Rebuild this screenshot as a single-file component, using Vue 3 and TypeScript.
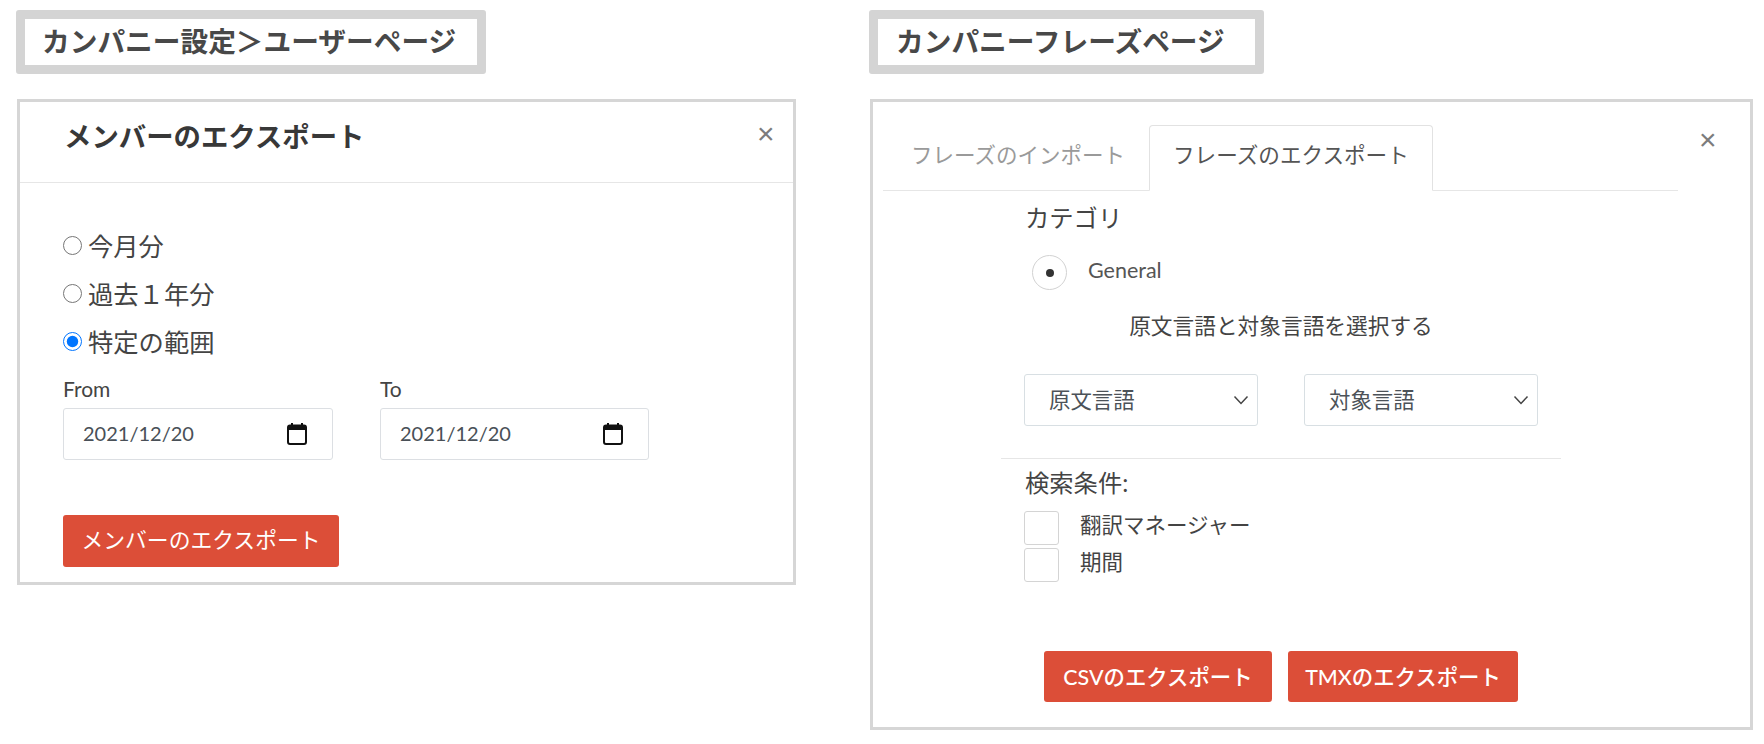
<script setup lang="ts">
const periods: { label: string; checked: boolean }[] = [
  { label: '今月分', checked: false },
  { label: '過去１年分', checked: false },
  { label: '特定の範囲', checked: true },
]
const dates: string[] = ['From', 'To']
const selects: string[] = ['原文言語', '対象言語']
const filters: string[] = ['翻訳マネージャー', '期間']
</script>

<template>
  <div class="page">
    <section class="col col-left">
      <h2 class="caption caption-left">カンパニー設定＞ユーザーページ</h2>
      <div class="panel panel-left">
        <header class="modal-head">
          <h3 class="modal-title">メンバーのエクスポート</h3>
          <span class="close close-left">×</span>
        </header>
        <div class="modal-body">
          <label v-for="p in periods" :key="p.label" class="period">
            <input class="period-radio" type="radio" name="period" :checked="p.checked" />
            <span>{{ p.label }}</span>
          </label>
          <div class="dates">
            <div v-for="d in dates" :key="d" class="date-field">
              <div class="date-label">{{ d }}</div>
              <div class="date-input">
                <span>2021/12/20</span>
                <svg class="cal" width="22" height="24" viewBox="0 0 22 24">
                  <rect x="2" y="3.5" width="18" height="18.5" rx="2" fill="none" stroke="#111" stroke-width="2" />
                  <rect x="2" y="3" width="18" height="5" fill="#111" />
                  <rect x="5" y="1" width="2" height="3" fill="#111" />
                  <rect x="15" y="1" width="2" height="3" fill="#111" />
                </svg>
              </div>
            </div>
          </div>
          <button class="btn btn-member" type="button">メンバーのエクスポート</button>
        </div>
      </div>
    </section>

    <section class="col col-right">
      <h2 class="caption caption-right">カンパニーフレーズページ</h2>
      <div class="panel panel-right">
        <span class="close close-right">×</span>
        <nav class="tabs">
          <span class="tab">フレーズのインポート</span>
          <span class="tab tab-active">フレーズのエクスポート</span>
        </nav>
        <div class="phrase-body">
          <div class="heading cat-heading">カテゴリ</div>
          <div class="cat-row">
            <span class="cat-radio"><i class="cat-dot"></i></span>
            <span class="cat-name">General</span>
          </div>
          <div class="lang-note">原文言語と対象言語を選択する</div>
          <div class="selects">
            <div v-for="s in selects" :key="s" class="select">
              <span class="select-text">{{ s }}</span>
              <svg width="16" height="10" viewBox="0 0 16 10">
                <path d="M1.5 1.5 L8 8.5 L14.5 1.5" fill="none" stroke="#444" stroke-width="1.5" />
              </svg>
            </div>
          </div>
          <div class="filters">
            <div class="heading filter-heading">検索条件:</div>
            <div v-for="f in filters" :key="f" class="filter">
              <span class="check"></span>
              <span class="filter-name">{{ f }}</span>
            </div>
          </div>
          <div class="actions">
            <button class="btn btn-csv" type="button">CSVのエクスポート</button>
            <button class="btn btn-tmx" type="button">TMXのエクスポート</button>
          </div>
        </div>
      </div>
    </section>
  </div>
</template>

<style scoped>
.page {
  display: flex;
  width: 1764px;
  height: 744px;
  box-sizing: border-box;
  padding: 10px 0 0 16px;
  overflow: hidden;
  background: #fff;
  color: #444;
  font-family: Lato, "Noto Sans CJK JP", sans-serif;
}
.col-left { width: 853px; flex: none; }
.col-right { width: 885px; flex: none; }
.caption {
  box-sizing: border-box;
  height: 64px;
  margin: 0;
  border: 9px solid #d4d4d4;
  border-radius: 3px;
  display: flex;
  align-items: center;
  padding-bottom: 4px;
  font-size: 27.7px;
  font-weight: 700;
  color: #484848;
  white-space: nowrap;
}
.caption-left { width: 470px; padding-left: 17px; }
.caption-right { width: 395px; padding-left: 18px; }
.panel {
  box-sizing: border-box;
  margin-top: 25px;
  border: 3px solid #d6d6d6;
  position: relative;
}
.panel-left { width: 779px; height: 486px; margin-left: 1px; }
.panel-right { width: 883px; height: 631px; margin-left: 1px; }
.modal-head {
  height: 81px;
  box-sizing: border-box;
  border-bottom: 1px solid #e6e6e6;
  padding: 0 0 14px 44px;
  display: flex;
  align-items: center;
}
.modal-title {
  margin: 0;
  font-size: 27.4px;
  font-weight: 700;
  color: #383838;
}
.close {
  position: absolute;
  font-family: "Liberation Sans", sans-serif;
  font-size: 30px;
  line-height: 25px;
  font-weight: 400;
  color: #7c7c7c;
}
.close-left { left: 737px; top: 19px; }
.close-right { left: 826px; top: 25px; }
.modal-body { padding: 38px 0 0 43px; }
.period {
  display: flex;
  align-items: center;
  height: 48px;
  font-size: 25.3px;
  color: #444;
}
.period-radio {
  width: 19px;
  height: 19px;
  margin: 0 6px 0 0;
  flex: none;
}
.dates {
  display: grid;
  grid-template-columns: 270px 269px;
  column-gap: 47px;
  margin-top: 12px;
}
.date-label {
  font-size: 21px;
  line-height: 24px;
  margin-bottom: 7px;
  color: #444;
}
.date-input {
  box-sizing: border-box;
  height: 52px;
  border: 1px solid #dcdfe3;
  border-radius: 3px;
  display: flex;
  align-items: center;
  justify-content: space-between;
  padding: 0 24px 2px 19px;
  font-size: 20px;
  color: #495057;
}
.cal { display: block; margin-top: 2px; }
.btn {
  border: 0;
  border-radius: 3px;
  background: #dc4e38;
  color: #fff;
  font-family: inherit;
  padding: 0 0 5px;
  display: block;
  white-space: nowrap;
  text-align: center;
}
.btn-member {
  width: 276px;
  height: 52px;
  margin-top: 55px;
  font-size: 21.8px;
}
.tabs {
  width: 795px;
  height: 66px;
  box-sizing: border-box;
  margin: 23px 0 0 10px;
  border-bottom: 1px solid #e6e6e6;
  display: flex;
  align-items: flex-end;
  padding-left: 28px;
}
.tab {
  font-size: 21.5px;
  line-height: 1;
  color: #9a9a9a;
  padding-bottom: 24px;
  width: 238px;
  white-space: nowrap;
}
.tab-active {
  box-sizing: border-box;
  width: 284px;
  height: 66px;
  margin-bottom: -1px;
  padding: 19px 0 0 23px;
  background: #fff;
  border: 1px solid #e2e2e2;
  border-bottom-color: #fff;
  border-radius: 4px 4px 0 0;
  color: #555;
  font-size: 21.6px;
}
.phrase-body {
  width: 560px;
  margin-left: 128px;
}
.heading {
  padding-left: 24px;
  font-size: 24.3px;
  line-height: 34px;
  color: #444;
}
.cat-heading { margin-top: 10px; }
.cat-row {
  display: flex;
  align-items: center;
  margin: 20px 0 0 31px;
}
.cat-radio {
  box-sizing: border-box;
  width: 35px;
  height: 35px;
  border: 1px solid #d2d2d2;
  border-radius: 50%;
  display: flex;
  align-items: center;
  justify-content: center;
}
.cat-dot {
  width: 8px;
  height: 8px;
  border-radius: 50%;
  background: #333;
}
.cat-name {
  margin: 0 0 5px 21px;
  font-size: 21.5px;
  color: #555;
}
.lang-note {
  margin-top: 20px;
  height: 32px;
  line-height: 32px;
  text-align: center;
  font-size: 21.7px;
  color: #444;
}
.selects {
  display: flex;
  gap: 46px;
  margin: 32px 0 0 23px;
  padding-bottom: 32px;
}
.select {
  box-sizing: border-box;
  width: 234px;
  height: 52px;
  border: 1px solid #d8dfe3;
  border-radius: 3px;
  display: flex;
  align-items: center;
  justify-content: space-between;
  padding: 0 8px 0 24px;
  font-size: 21.4px;
  color: #4c5258;
}
.select-text { margin-bottom: 4px; }
.filters {
  border-top: 1px solid #e6e6e6;
  padding-top: 7px;
}
.filter {
  display: flex;
  align-items: flex-start;
  margin-left: 23px;
  height: 37px;
}
.filter-heading { margin-bottom: 11px; }
.check {
  box-sizing: border-box;
  width: 35px;
  height: 34px;
  border: 1px solid #d4d4d4;
  border-radius: 3px;
}
.filter-name {
  margin-left: 21px;
  font-size: 21.5px;
  line-height: 28px;
  color: #444;
}
.actions {
  display: flex;
  gap: 16px;
  justify-content: center;
  margin-top: 66px;
}
.actions .btn {
  height: 51px;
  font-size: 21.4px;
  font-weight: 500;
  padding-bottom: 3px;
}
.btn-csv { width: 228px; }
.btn-tmx { width: 230px; }
</style>
